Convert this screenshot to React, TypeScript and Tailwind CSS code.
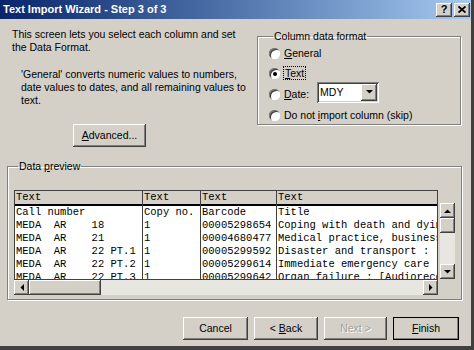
import { ReactNode } from "react";

const raised =
  "bg-[#d4d0c8] shadow-[inset_-1px_-1px_0_#404040,inset_1px_1px_0_#ffffff,inset_-2px_-2px_0_#808080,inset_2px_2px_0_#d4d0c8]";
const sunken =
  "shadow-[inset_1px_1px_0_#808080,inset_-1px_-1px_0_#ffffff,inset_2px_2px_0_#404040,inset_-2px_-2px_0_#d4d0c8]";

const Arrow = ({ dir }: { dir: "up" | "down" | "left" | "right" }) => {
  const pts = {
    up: "0,4 7,4 3.5,0.5",
    down: "0,0 7,0 3.5,3.5",
    left: "4,0 4,7 0.5,3.5",
    right: "0,0 0,7 3.5,3.5",
  }[dir];
  const vert = dir === "up" || dir === "down";
  return (
    <svg width={vert ? 7 : 4} height={vert ? 4 : 7} viewBox={vert ? "0 0 7 4" : "0 0 4 7"}>
      <polygon points={pts} fill="#000" />
    </svg>
  );
};

const ScrollBtn = ({ dir }: { dir: "up" | "down" | "left" | "right" }) => (
  <div className={`${raised} w-[15px] h-[15px] flex items-center justify-center shrink-0`}>
    <Arrow dir={dir} />
  </div>
);

const Radio = ({ checked, children }: { checked?: boolean; children: ReactNode }) => (
  <div className="flex items-center gap-[4px]">
    <div className="w-[11px] h-[11px] rounded-full bg-white shadow-[inset_1px_1px_0_#808080,inset_-1px_-1px_0_#ffffff,inset_2px_2px_0_#404040] flex items-center justify-center">
      {checked && <div className="w-[4px] h-[4px] rounded-full bg-black" />}
    </div>
    <span>{children}</span>
  </div>
);

const Button = ({
  children,
  className = "",
  disabled,
  primary,
}: {
  children: ReactNode;
  className?: string;
  disabled?: boolean;
  primary?: boolean;
}) => (
  <div
    className={`${raised} h-[23px] flex items-center justify-center ${
      primary ? "outline outline-1 outline-black -outline-offset-1" : ""
    } ${disabled ? "text-[#a0a0a0] [text-shadow:1px_1px_0_#ffffff]" : "text-black"} ${className}`}
  >
    {children}
  </div>
);

const cols = [
  { w: "w-[127px]", head: "Text", rows: ["Call number", "MEDA  AR    18", "MEDA  AR    21", "MEDA  AR    22 PT.1", "MEDA  AR    22 PT.2", "MEDA  AR    22 PT.3"] },
  { w: "w-[58px]", head: "Text", rows: ["Copy no.", "1", "1", "1", "1", "1"] },
  { w: "w-[76px]", head: "Text", rows: ["Barcode", "00005298654", "00004680477", "00005299592", "00005299614", "00005299642"] },
  {
    w: "flex-1",
    head: "Text",
    rows: [
      "Title",
      "Coping with death and dying",
      "Medical practice, business and law",
      "Disaster and transport : [Audio]",
      "Immediate emergency care : [Audio]",
      "Organ failure : [Audiorecording]",
    ],
  },
];

export default function App() {
  return (
    <div className="w-[474px] h-[350px] overflow-hidden bg-[#d4d0c8] text-[10.5px] leading-[13px] text-black font-['Liberation_Sans',Arial,sans-serif] flex flex-col border-r-[3px] border-b-[4px] border-[#404040]">
      {/* title bar */}
      <div className="h-[19px] shrink-0 flex items-center justify-between pl-[3px] pr-[1px] bg-gradient-to-r from-[#0a246a] to-[#a6caf0]">
        <span className="text-white font-bold text-[11px]">Text Import Wizard - Step 3 of 3</span>
        <div className="flex gap-[2px]">
          <div className={`${raised} w-[16px] h-[14px] flex items-center justify-center font-bold text-[11px] leading-none`}>?</div>
          <div className={`${raised} w-[16px] h-[14px] flex items-center justify-center`}>
            <svg width="8" height="7" viewBox="0 0 8 7">
              <path d="M0.5 0.5 L7.5 6.5 M7.5 0.5 L0.5 6.5" stroke="#000" strokeWidth="1.8" />
            </svg>
          </div>
        </div>
      </div>

      {/* top section */}
      <div className="h-[141px] shrink-0 flex">
        <div className="w-[245px] pl-[12px] pt-[9px] flex flex-col whitespace-nowrap">
          <p>
            This screen lets you select each column and set
            <br />
            the Data Format.
          </p>
          <p className="mt-[14px] pl-[9px]">
            'General' converts numeric values to numbers,
            <br />
            date values to dates, and all remaining values to
            <br />
            text.
          </p>
          <Button className="ml-[61px] mt-[17px] w-[73px]">
            <span>
              <u>A</u>dvanced...
            </span>
          </Button>
        </div>
        <fieldset className="ml-[12px] mt-[11px] w-[204px] h-[95px] border border-[#808080] shadow-[1px_1px_0_#ffffff,inset_1px_1px_0_#ffffff] px-[11px]">
          <legend className="px-[1px] ml-[4px]">Column data format</legend>
          <div className="flex flex-col">
            <div className="h-[20px] flex items-center">
              <Radio>
                <u>G</u>eneral
              </Radio>
            </div>
            <div className="h-[21px] flex items-center">
              <Radio checked>
                <span className="outline outline-1 outline-dotted outline-black px-[1px]">
                  <u>T</u>ext
                </span>
              </Radio>
            </div>
            <div className="h-[21px] flex items-center">
              <Radio>
                <u>D</u>ate:
              </Radio>
              <div className={`ml-[8px] -mt-[5px] w-[62px] h-[21px] bg-white ${sunken} flex items-center p-[2px]`}>
                <span className="flex-1 pl-[1px]">MDY</span>
                <div className={`${raised} w-[16px] h-[17px] flex items-center justify-center`}>
                  <Arrow dir="down" />
                </div>
              </div>
            </div>
            <div className="h-[21px] flex items-center">
              <Radio>
                Do not <u>i</u>mport column (skip)
              </Radio>
            </div>
          </div>
        </fieldset>
      </div>

      {/* data preview */}
      <fieldset className="ml-[7px] w-[454px] h-[140px] shrink-0 border border-[#808080] shadow-[1px_1px_0_#ffffff,inset_1px_1px_0_#ffffff] px-[6px]">
        <legend className="px-[1px] ml-[4px]">
          Data <u>p</u>review
        </legend>
        <div className="mt-[17px] flex">
          <div className="w-[424px] flex flex-col">
            <div className="h-[89px] overflow-hidden bg-white border-t border-l border-r border-[#404040] flex font-['Liberation_Mono','Courier_New',monospace] text-[10.5px] leading-[13px]">
              {cols.map((c, i) => (
                <div key={i} className={`${c.w} shrink-0 overflow-hidden whitespace-pre ${i > 0 ? "border-l border-[#404040]" : ""}`}>
                  <div className="h-[13px] bg-[#d4d0c8] border-b-2 border-black pl-[1px] box-content">{c.head}</div>
                  {c.rows.map((r, j) => (
                    <div key={j} className="h-[13px] pl-[1px]">
                      {r}
                    </div>
                  ))}
                </div>
              ))}
            </div>
            <div className="h-[16px] flex bg-[#e8e6e1] border-t border-[#404040]">
              <ScrollBtn dir="left" />
              <div className={`${raised} w-[72px] h-[15px]`} />
              <div className="flex-1" />
              <ScrollBtn dir="right" />
            </div>
          </div>
          <div className="ml-[2px] mt-[13px] w-[15px] h-[76px] flex flex-col bg-[#e8e6e1]">
            <ScrollBtn dir="up" />
            <div className={`${raised} w-[15px] h-[15px]`} />
            <div className="flex-1" />
            <ScrollBtn dir="down" />
          </div>
        </div>
      </fieldset>

      {/* buttons */}
      <div className="mt-[17px] flex pl-[183px] gap-[6px]">
        <Button className="w-[65px]">Cancel</Button>
        <Button className="w-[64px]">
          <span>
            &lt; <u>B</u>ack
          </span>
        </Button>
        <Button className="w-[63px]" disabled>
          Next &gt;
        </Button>
        <Button className="w-[66px]" primary>
          <span>
            <u>F</u>inish
          </span>
        </Button>
      </div>
    </div>
  );
}
